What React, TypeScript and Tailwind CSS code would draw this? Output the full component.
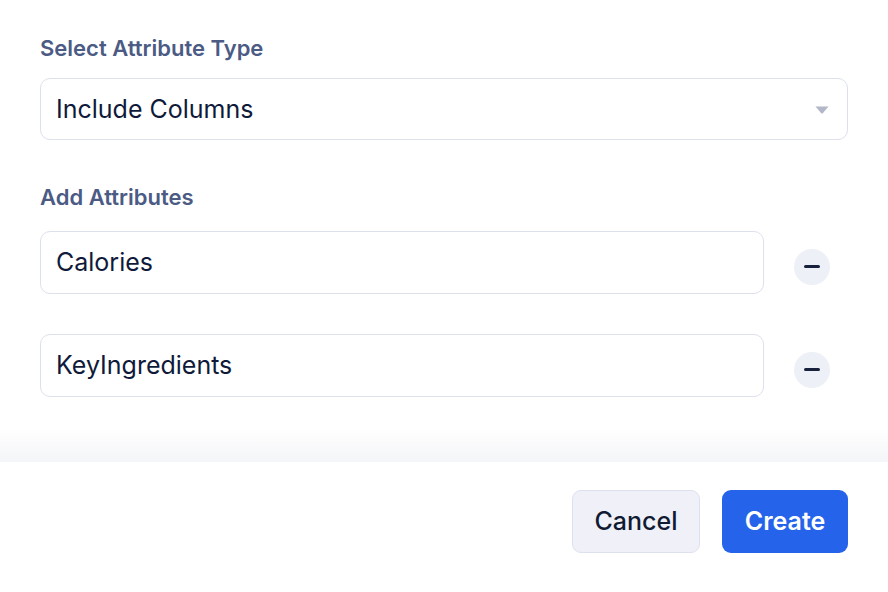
const attributes = ['Calories', 'KeyIngredients'];

const MinusButton = () => (
  <button
    type="button"
    className="ml-[30px] mr-[18px] mt-[8px] flex h-[36px] w-[36px] shrink-0 items-center justify-center rounded-full bg-[#eef0f7]"
  >
    <span className="block h-[3px] w-[16px] rounded-full bg-[#17203d]" />
  </button>
);

export default function App() {
  return (
    <div
      className="flex h-[592px] w-[888px] flex-col bg-white text-[#0f1a3a]"
      style={{ fontFamily: 'Inter, "Noto Sans", sans-serif' }}
    >
      <div className="px-[40px] pt-[34px]">
        <label className="block h-[28px] text-[22px] leading-[28px] font-semibold text-[#4b5b84]">
          Select Attribute Type
        </label>
        <div className="mt-[16px] flex h-[62px] items-center justify-between rounded-[10px] border border-[#dde1ec] pl-[15px] pr-[18px]">
          <span className="text-[25px] leading-none">Include Columns</span>
          <svg width="14" height="8" viewBox="0 0 14 8" className="mt-[2px]">
            <path d="M0.5 0.5 H13.5 L7.8 7.2 Q7 8 6.2 7.2 Z" fill="#b3b8c8" />
          </svg>
        </div>

        <label className="mt-[43px] block h-[28px] text-[22px] leading-[28px] font-semibold text-[#4b5b84]">
          Add Attributes
        </label>
        <div className="mt-[20px] flex flex-col gap-[40px]">
          {attributes.map((name) => (
            <div key={name} className="flex items-center">
              <div className="flex h-[63px] flex-1 items-center rounded-[10px] border border-[#dde1ec] pl-[15px]">
                <span className="text-[25px] leading-none">{name}</span>
              </div>
              <MinusButton />
            </div>
          ))}
        </div>
      </div>

      <div className="mt-auto h-[34px] bg-gradient-to-b from-white to-[#f4f5f8]" />
      <div className="flex h-[130px] items-start justify-end gap-[22px] bg-white px-[40px] pt-[28px]">
        <button
          type="button"
          className="h-[63px] w-[128px] rounded-[9px] border border-[#dde1ee] bg-[#f0f1f8] text-[25px] font-medium text-[#111a33]"
        >
          Cancel
        </button>
        <button
          type="button"
          className="h-[63px] w-[126px] rounded-[9px] bg-[#2563eb] text-[25px] font-semibold text-white"
        >
          Create
        </button>
      </div>
    </div>
  );
}
